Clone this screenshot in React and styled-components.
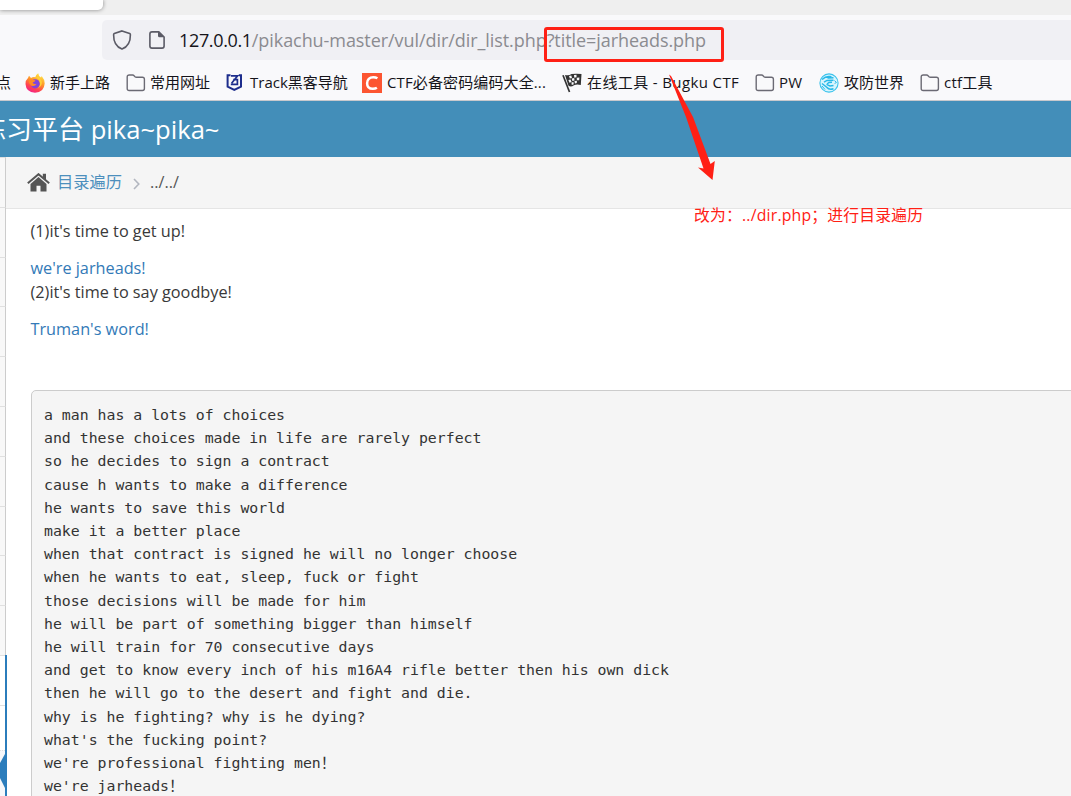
import React from "react";
import styled, { createGlobalStyle } from "styled-components";

const Global = createGlobalStyle`
  *, *::before, *::after { box-sizing: border-box; }
  html, body { margin: 0; padding: 0; overflow: hidden; }
`;

const Page = styled.div`
  position: relative;
  width: 1071px;
  height: 796px;
  overflow: hidden;
  background: #fff;
  font-family: "Open Sans", "Noto Sans CJK SC", sans-serif;
  color: #393939;
`;

const TabStrip = styled.div`
  height: 15px;
  background: #efefef;
`;

const ActiveTab = styled.div`
  width: 103px;
  height: 10px;
  background: #fff;
  border-radius: 0 0 5px 0;
  box-shadow: 0 0 4px rgba(0, 0, 0, 0.45);
`;

const Chrome = styled.div`
  height: 86px;
  padding-top: 5px;
  background: #f9f9fb;
  border-bottom: 1px solid #c9c9cd;
`;

const AddressBar = styled.div`
  display: flex;
  align-items: center;
  height: 40px;
  margin-left: 102px;
  padding-left: 10px;
  background: #f0f0f4;
  border-radius: 5px 0 0 5px;
`;

const AddressIcon = styled.svg`
  flex: none;
  width: 20px;
  height: 20px;
  margin-right: ${(p) => p.$gap}px;
`;

const Url = styled.div`
  font-family: "Open Sans", sans-serif;
  font-size: 18px;
  line-height: 40px;
  letter-spacing: ${(p) => p.$spacing || 0}px;
  white-space: nowrap;
  color: ${(p) => (p.$host ? "#15141a" : "#8b8b90")};
`;

const Bookmarks = styled.div`
  display: flex;
  align-items: center;
  height: 40px;
  padding-top: 5px;
`;

const Bookmark = styled.div`
  flex: none;
  display: flex;
  align-items: center;
  width: ${(p) => p.$width}px;
  margin-left: ${(p) => p.$offset || 0}px;
`;

const BookmarkIcon = styled.svg`
  flex: none;
  width: 20px;
  height: 20px;
  margin-right: ${(p) => p.$gap || 5}px;
`;

const BookmarkLabel = styled.span`
  margin-top: -2px;
  font-size: 15px;
  line-height: 20px;
  letter-spacing: ${(p) => p.$spacing || 0}px;
  white-space: nowrap;
  color: #15141a;
`;

const SiteHeader = styled.header`
  display: flex;
  align-items: center;
  height: 56px;
  background: #438eb9;
`;

const SiteTitle = styled.h1`
  flex: none;
  margin: 0 0 0 -20px;
  font-size: 26px;
  font-weight: 400;
  line-height: 56px;
  white-space: nowrap;
  color: #fff;
`;

const TitleName = styled.span`
  font-size: 25.6px;
`;

const Body = styled.div`
  display: flex;
  height: 639px;
`;

const Sidebar = styled.nav`
  flex: none;
  width: 7px;
`;

const MenuRow = styled.div`
  width: 6px;
  height: 49.8px;
  background: #f8f8f8;
  border-top: 1px solid #e0e0e0;
  border-right: 1px solid #ccc;
`;

const OpenMenu = styled.div`
  width: 7px;
  height: 141px;
  background: #fff;
  border-right: 2px solid #2b7dbc;
`;

const SubRow = styled.div`
  display: flex;
  align-items: center;
  height: ${(p) => p.$height}px;
  background: ${(p) => (p.$current ? "#f5f7fa" : "#fff")};
  border-top: 1px ${(p) => (p.$current ? "dotted" : "solid")} #e0e0e0;
`;

const Caret = styled.svg`
  flex: none;
  width: 5px;
  height: 34px;
  margin-top: -5px;
`;

const Main = styled.main`
  flex: 1;
  min-width: 0;
  margin-left: -1px;
`;

const Breadcrumbs = styled.div`
  display: flex;
  align-items: center;
  height: 52px;
  padding-left: 21px;
  background: #f5f5f5;
  border-bottom: 1px solid #e5e5e5;
  font-size: 16.25px;
`;

const HomeIcon = styled.svg`
  width: 23px;
  height: 19px;
  margin-right: 7px;
`;

const Crumb = styled.span`
  margin-top: -1px;
  line-height: 24px;
  white-space: nowrap;
  color: ${(p) => (p.$link ? "#4c8fbd" : "#555")};
`;

const Separator = styled.svg`
  width: 7px;
  height: 12px;
  margin: 3px 10px 0 11px;
`;

const Content = styled.div`
  padding: 10px 0 0 24.5px;
`;

const Line = styled.p`
  margin: 0 0 ${(p) => p.$after || 0}px;
  font-size: 16.25px;
  line-height: 24.375px;
  color: ${(p) => (p.$link ? "#337ab7" : "#393939")};
`;

const Pre = styled.pre`
  width: 1060px;
  height: 460px;
  margin: 0 0 0 0.5px;
  padding: 12px;
  background: #f5f5f5;
  border: 1px solid #ccc;
  border-radius: 5px;
  font-family: "DejaVu Sans Mono", "Noto Sans CJK SC", monospace;
  font-size: 14.84px;
  line-height: 23.2px;
  color: #333;
`;

const Highlight = styled.div`
  position: absolute;
  left: 544px;
  top: 27px;
  width: 180px;
  height: 35px;
  border: 3px solid #ff2015;
  border-radius: 3px;
`;

const Arrow = styled.svg`
  position: absolute;
  left: 660px;
  top: 70px;
  width: 70px;
  height: 115px;
`;

const Note = styled.div`
  position: absolute;
  left: 694px;
  top: 203px;
  font-size: 15.8px;
  line-height: 24px;
  letter-spacing: 0.2px;
  white-space: nowrap;
  color: #ff2015;
`;

const Folder = () => (
  <BookmarkIcon viewBox="0 0 20 20" $gap={4}>
    <path d="M1.2 15.5V4Q1.2 2 3.2 2H6.6Q7.5 2 8.1 2.7L9 3.7Q9.6 4.3 10.5 4.3H16.4Q18.4 4.3 18.4 6.3V15.5Q18.4 17.5 16.4 17.5H3.2Q1.2 17.5 1.2 15.5Z" fill="none" stroke="#6b6a74" strokeWidth="1.4" />
  </BookmarkIcon>
);

const Firefox = () => (
  <BookmarkIcon viewBox="0 0 20 20">
    <defs>
      <linearGradient id="flame" x1=".8" y1="0" x2=".3" y2="1">
        <stop offset="0" stopColor="#fff04a" />
        <stop offset=".45" stopColor="#ff9328" />
        <stop offset=".75" stopColor="#ff4350" />
        <stop offset="1" stopColor="#f2208c" />
      </linearGradient>
    </defs>
    <path d="M3 5L4 2.8L6 5Q8 3.7 10.3 4.2Q10.8 1.8 13.2.3Q13.4 3 16 4.5L16.7 3Q19.7 6.5 19.7 10.5Q19 19.6 10 19.7Q1 19.3.5 11Q.3 7.3 3 5Z" fill="url(#flame)" />
    <circle cx="10.2" cy="10.8" r="4.6" fill="#8044dc" />
    <path d="M3.5 6.2Q6 5.3 8 7L10.5 7.3Q9.8 9 7.6 9.4Q8.6 11.5 11.6 10.7Q9.6 14 6 12.4Q3.5 10.5 3.5 6.2Z" fill="#ff8b24" />
    <path d="M10 5Q14 5 14.8 9Q16 12 13 15Q18 12.5 16.6 8Q15.5 5 13 3.5Z" fill="#ffd137" />
  </BookmarkIcon>
);

const Track = () => (
  <BookmarkIcon viewBox="0 0 20 20">
    <path d="M5.5 2.2H2.6V13.6L9.3 17L16 13.6V2.2H13.8" fill="none" stroke="#1d2d8c" strokeWidth="2" />
    <path d="M6 2.8H12.6L6.6 10.2M8.2 6.6H12.4V11.3H5.8" fill="none" stroke="#1d2d8c" strokeWidth="1.7" />
  </BookmarkIcon>
);

const RedC = () => (
  <BookmarkIcon viewBox="0 0 20 20">
    <path d="M0 0H20V20H0Z" fill="#fc5531" />
    <path d="M15.4 5.3Q13.7 4.2 11.3 4.2C7.5 4.2 5.1 6.6 5.1 10.2C5.1 13.7 7.2 15.8 10.8 15.8Q13.3 15.8 14.9 14.8" fill="none" stroke="#fff" strokeWidth="2.5" />
  </BookmarkIcon>
);

const Flag = () => (
  <BookmarkIcon viewBox="0 0 20 20">
    <path d="M1 2.2L7.5 19" stroke="#333" strokeWidth="1.7" />
    <path d="M3 2Q7 3 9.5 1Q14 .5 19.5 1L18.8 12Q15 10.8 12 12.2Q9 14.5 6.5 12.8Z" fill="#333" />
    <path d="M7 3L9.3 2.5L10 5L7.8 5.6ZM12 2L14.5 1.8L14.5 4.3L12.3 4.7ZM9.7 5.5L12.2 5L12.5 7.6L10.4 8.1ZM14.7 4.7L17.4 4.5L17.2 7.2L14.9 7.3ZM6.4 7L8.5 6.5L9.6 9L7.5 9.7ZM12.5 8L14.9 7.8L14.8 10L12.9 10.6ZM9.4 9.4L11.4 9L11.8 11.2L9.8 12Z" fill="#f9f9fb" />
  </BookmarkIcon>
);

const Globe = () => (
  <BookmarkIcon viewBox="0 0 20 20">
    <circle cx="10" cy="10" r="9.1" fill="#d8f5fd" stroke="#3cc3ec" strokeWidth="1.1" />
    <path d="M3 6.5Q7 2.8 11 3.6L8.6 5L14.5 4.8M5 9.2L8 7.4L14.5 7.2M8 11L10 9.5L13 9.2M7.5 11.4L11 13L14.5 12.6M3 10.5L8 14.5Q10 17.2 14.5 15.8" fill="none" stroke="#29b9e9" strokeWidth="1.5" />
    <path d="M15.5 7.5L17.4 9.5L15.6 10.5M3 13L6 16.5" fill="none" stroke="#29b9e9" strokeWidth="1" />
  </BookmarkIcon>
);

const bookmarks = [
  { icon: Firefox, label: "新手上路", width: 101 },
  { icon: Folder, label: "常用网址", width: 99 },
  { icon: Track, label: "Track黑客导航", width: 137 },
  { icon: RedC, label: "CTF必备密码编码大全...", width: 200, spacing: 0.12 },
  { icon: Flag, label: "在线工具 - Bugku CTF", width: 193, spacing: 0.38 },
  { icon: Folder, label: "PW", width: 64, spacing: 0.3 },
  { icon: Globe, label: "攻防世界", width: 101 },
  { icon: Folder, label: "ctf工具", width: 90, spacing: 0.2 },
];

const poem = `a man has a lots of choices
and these choices made in life are rarely perfect
so he decides to sign a contract
cause h wants to make a difference
he wants to save this world
make it a better place
when that contract is signed he will no longer choose
when he wants to eat, sleep, fuck or fight
those decisions will be made for him
he will be part of something bigger than himself
he will train for 70 consecutive days
and get to know every inch of his m16A4 rifle better then his own dick
then he will go to the desert and fight and die.
why is he fighting? why is he dying?
what's the fucking point?
we're professional fighting men！
we're jarheads！`;

export default function App() {
  return (
    <Page>
      <Global />
      <TabStrip>
        <ActiveTab />
      </TabStrip>
      <Chrome>
        <AddressBar>
          <AddressIcon viewBox="0 0 20 20" $gap={15}>
            <path d="M10 .9L17.7 3.6Q18.4 3.9 18.4 4.7C18.5 11.5 15.6 16.9 10 19.1C4.4 16.9 1.5 11.5 1.6 4.7Q1.6 3.9 2.3 3.6Z" fill="none" stroke="#5b5b66" strokeWidth="1.6" />
          </AddressIcon>
          <AddressIcon viewBox="0 0 20 20" $gap={12}>
            <path d="M5 1.9H11.8L17.1 7V16Q17.1 18.1 15 18.1H5Q2.9 18.1 2.9 16V4Q2.9 1.9 5 1.9Z" fill="none" stroke="#5b5b66" strokeWidth="1.6" />
            <path d="M11 1.5L17.5 7.3H12.5Q11 7.3 11 5.8Z" fill="#5b5b66" />
          </AddressIcon>
          <Url $host $spacing={-0.35}>127.0.0.1</Url>
          <Url $spacing={-0.065}>/pikachu-master/vul/dir/dir_list.php?title=jarheads.php</Url>
        </AddressBar>
        <Bookmarks>
          <Bookmark $width={29} $offset={-4}>
            <BookmarkLabel>点</BookmarkLabel>
          </Bookmark>
          {bookmarks.map(({ icon: Icon, label, width, spacing }) => (
            <Bookmark key={label} $width={width}>
              <Icon />
              <BookmarkLabel $spacing={spacing}>{label}</BookmarkLabel>
            </Bookmark>
          ))}
        </Bookmarks>
      </Chrome>
      <SiteHeader>
        <SiteTitle>
          练习平台<TitleName> pika~pika~</TitleName>
        </SiteTitle>
      </SiteHeader>
      <Body>
        <Sidebar>
          {Array.from({ length: 10 }, (_, i) => (
            <MenuRow key={i} />
          ))}
          <OpenMenu>
            <SubRow $height={50} />
            <SubRow $height={45} />
            <SubRow $height={46} $current>
              <Caret viewBox="0 0 5 34">
                <path d="M5 0V34L0 24V9Z" fill="#2b7dbc" />
              </Caret>
            </SubRow>
          </OpenMenu>
        </Sidebar>
        <Main>
          <Breadcrumbs>
            <HomeIcon viewBox="0 0 23 19">
              <path d="M3.5 11L11.5 4L19.5 11V18.5H13.5V12.8H9.5V18.5H3.5Z" fill="#555" />
              <path d="M.8 10.3L11.5 1.2L22.2 10.3" fill="none" stroke="#555" strokeWidth="2" />
              <path d="M15.8.8H19V7L15.8 4.5Z" fill="#555" />
            </HomeIcon>
            <Crumb $link>目录遍历</Crumb>
            <Separator viewBox="0 0 7 12">
              <path d="M1 1L5.8 6L1 11" fill="none" stroke="#b2b6bf" strokeWidth="1.6" />
            </Separator>
            <Crumb>../../</Crumb>
          </Breadcrumbs>
          <Content>
            <Line $after={12.5}>(1)it's time to get up!</Line>
            <Line $link>we're jarheads!</Line>
            <Line $after={12.5}>(2)it's time to say goodbye!</Line>
            <Line $link $after={48.5}>Truman's word!</Line>
            <Pre>{poem}</Pre>
          </Content>
        </Main>
      </Body>
      <Highlight />
      <Arrow viewBox="660 70 70 115">
        <path d="M669 74.5L671 76L693 117L710.5 164L714.8 161L712.5 180L698 167.5L703.5 168.5L686 117Z" fill="#ff2015" />
      </Arrow>
      <Note>改为：../dir.php；进行目录遍历</Note>
    </Page>
  );
}
